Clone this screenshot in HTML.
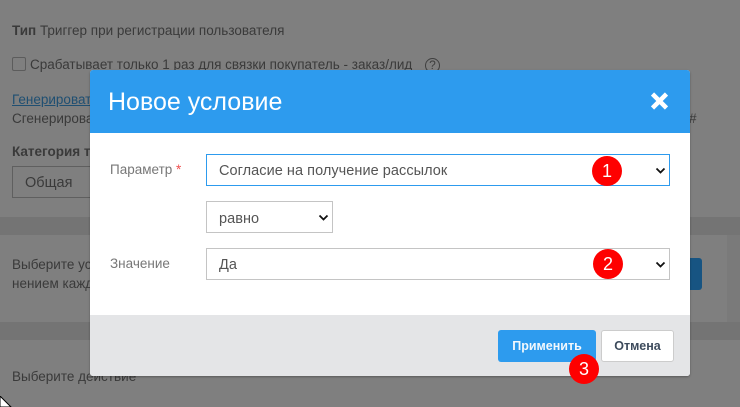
<!DOCTYPE html>
<html lang="ru"><head><meta charset="utf-8">
<style>
html,body{margin:0;padding:0}
body{width:740px;height:407px;overflow:hidden;position:relative;background:#7f7f7f;font-family:"Liberation Sans","DejaVu Sans",sans-serif;font-size:13.5px;letter-spacing:0}
.t{position:absolute;white-space:nowrap;line-height:16px;color:#3a3a3a}
.b{position:absolute}
.sel{position:absolute;box-sizing:border-box;background:#fff;border:1px solid #c4c4c4;font-size:14.5px;letter-spacing:.05px;color:#555;line-height:33px;padding-left:12px;white-space:nowrap}
.chev{position:absolute;width:12px;height:8px}
.n{position:absolute;width:30px;height:30px;border-radius:50%;background:#fe0000;color:#fff;font-size:18px;line-height:30px;text-align:center;letter-spacing:0}
</style></head>
<body>
<div class="b" style="left:0;top:217px;width:740px;height:18px;background:#747474"></div>
<div class="b" style="left:0;top:322px;width:740px;height:18px;background:#747474"></div>
<div class="b" style="left:727px;top:235px;width:13px;height:87px;background:#7a7a7a"></div>
<div class="b" style="left:660px;top:258px;width:42px;height:32px;border-radius:3px;background:#175482"></div>

<div class="t" style="left:12px;top:23px"><b>Тип</b> Триггер при регистрации пользователя</div>
<div class="b" style="left:12px;top:57px;width:12px;height:12px;border:1px solid #5c5c5c;border-radius:2px"></div>
<div class="t" style="left:30px;top:57px">Срабатывает только 1 раз для связки покупатель - заказ/лид</div>
<div class="b" style="left:425px;top:58px;width:13px;height:13px;border:1.5px solid #3f3f3f;border-radius:50%;font-size:12px;line-height:13px;text-align:center;color:#3f3f3f;letter-spacing:0">?</div>
<div class="t" style="left:12px;top:92px;color:#1f4f72;text-decoration:underline">Генерировать</div>
<div class="t" style="left:12px;top:111px">Сгенерировать</div>
<div class="t" style="left:689px;top:111px">#</div>
<div class="t" style="left:12px;top:144px"><b>Категория т</b></div>
<div class="b" style="left:12px;top:166px;width:90px;height:30px;border:1px solid #5f5f5f;box-sizing:content-box"></div>
<div class="t" style="left:25px;top:175px;font-size:14.5px">Общая</div>
<div class="t" style="left:12px;top:257px">Выберите условие</div>
<div class="t" style="left:12px;top:276px">нением каждого</div>
<div class="t" style="left:12px;top:369px">Выберите действие</div>
<svg class="b" style="left:0;top:396px" width="12" height="11"><path d="M0 0L11 11H0Z" fill="#fff" stroke="#000" stroke-width="1"/></svg>

<div class="b" style="left:90px;top:70px;width:600px;height:306px;background:#fff;border-radius:3px;overflow:hidden;box-shadow:0 1px 2px rgba(0,0,0,.3)">
  <div class="b" style="left:0;top:0;width:600px;height:63px;background:#2d9bee"></div>
  <div class="b" style="left:0;top:245px;width:600px;height:61px;background:#e4e5e7"></div>
  <div class="t" style="left:18px;top:16px;font-size:25px;line-height:32px;color:#fff;letter-spacing:0">Новое условие</div>
  <svg class="b" style="left:559px;top:21px" width="20" height="20"><path d="M3.5 3L17.5 17M17.5 3L3.5 17" stroke="#fff" stroke-width="4.5"/></svg>
</div>
<div class="t" style="left:110px;top:162px;color:#777">Параметр <span style="color:#f05050">*</span></div>
<div class="t" style="left:110px;top:256px;color:#777">Значение</div>

<div class="sel" style="left:206px;top:154px;width:464px;height:32px;border-color:#2d9bee">Согласие на получение рассылок</div>
<svg class="chev" style="left:655px;top:167px"><path d="M1.5 1.5L5.5 5.5L9.5 1.5" fill="none" stroke="#111" stroke-width="1.8"/></svg>
<div class="sel" style="left:206px;top:201px;width:127px;height:32px;line-height:34px">равно</div>
<svg class="chev" style="left:318px;top:214px"><path d="M1.5 1.5L5.5 5.5L9.5 1.5" fill="none" stroke="#111" stroke-width="1.8"/></svg>
<div class="sel" style="left:206px;top:248px;width:464px;height:32px">Да</div>
<svg class="chev" style="left:655px;top:261px"><path d="M1.5 1.5L5.5 5.5L9.5 1.5" fill="none" stroke="#111" stroke-width="1.8"/></svg>

<div class="b" style="left:498px;top:330px;width:98px;height:32px;background:#2d9bee;border-radius:3px;color:#f2f8fd;font-weight:bold;font-size:12.5px;line-height:32px;text-align:center">Применить</div>
<div class="b" style="left:601px;top:330px;width:73px;height:32px;box-sizing:border-box;background:#fff;border:1px solid #ccc;border-radius:3px;color:#3d4b5c;font-weight:bold;font-size:12.5px;line-height:30px;text-align:center">Отмена</div>

<div class="n" style="left:592px;top:156px">1</div>
<div class="n" style="left:593px;top:249px">2</div>
<div class="n" style="left:569px;top:354px">3</div>
</body></html>
